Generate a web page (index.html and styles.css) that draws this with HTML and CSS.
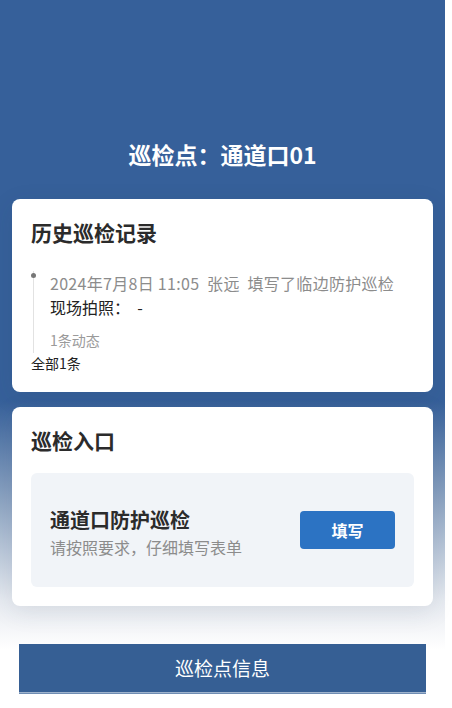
FILE: index.html
```html
<!DOCTYPE html>
<html lang="zh">
<head>
<meta charset="utf-8">
<link rel="stylesheet" href="styles.css">
</head>
<body>
<div class="page">
  <header class="header">
    <h1 class="title">巡检点：通道口01</h1>
  </header>
  <main class="cards">
    <section class="card">
      <h2 class="card-title">历史巡检记录</h2>
      <div class="timeline">
        <div class="tl-item">
          <span class="tl-dot"></span>
          <div class="tl-meta">2024年7月8日 11:05&nbsp; 张远&nbsp; 填写了临边防护巡检</div>
          <div class="tl-field">现场拍照：&nbsp; -</div>
          <div class="tl-count">1条动态</div>
        </div>
      </div>
      <div class="total">全部1条</div>
    </section>
    <section class="card">
      <h2 class="card-title">巡检入口</h2>
      <div class="entry">
        <div class="entry-text">
          <div class="entry-name">通道口防护巡检</div>
          <div class="entry-desc">请按照要求，仔细填写表单</div>
        </div>
        <button class="fill-btn">填写</button>
      </div>
    </section>
  </main>
  <nav class="tabs">
    <div class="tab">巡检点信息</div>
  </nav>
</div>
</body>
</html>
```
FILE: styles.css
```css
html, body {
  margin: 0;
  padding: 0;
  background: #ffffff;
}
body {
  font-family: "Noto Sans CJK SC", "Noto Sans", sans-serif;
  color: #333333;
}
.page {
  width: 445px;
  min-height: 708px;
  background: linear-gradient(to bottom, #36609a 0, #36609a 400px, #8da4c2 500px, #e6eaf0 600px, #ffffff 650px);
}
.header {
  padding-top: 138px;
  padding-bottom: 29px;
}
.title {
  margin: 0;
  text-align: center;
  color: #ffffff;
  font-size: 23px;
  line-height: 32px;
  font-weight: 700;
}
.cards {
  padding: 0 12px;
  display: flex;
  flex-direction: column;
  gap: 15px;
}
.card {
  background: #ffffff;
  border-radius: 8px;
  padding: 19px;
  box-shadow: 0 6px 24px rgba(40, 60, 90, 0.10);
}
.card-title {
  margin: 0;
  font-size: 21px;
  line-height: 28px;
  font-weight: 700;
  color: #2b2b2b;
}
.timeline {
  margin-top: 25px;
  margin-left: 2px;
  border-left: 1px solid #e2e2e2;
  padding-bottom: 3px;
}
.tl-item {
  position: relative;
  padding-left: 16px;
}
.tl-dot {
  position: absolute;
  left: -3px;
  top: 2px;
  width: 5px;
  height: 5px;
  border-radius: 50%;
  background: #777777;
}
.tl-meta {
  font-size: 16px;
  line-height: 24px;
  color: #8c8c8c;
  white-space: nowrap;
  letter-spacing: 0.3px;
}
.tl-field {
  font-size: 16px;
  line-height: 24px;
  color: #222222;
}
.tl-count {
  margin-top: 11px;
  font-size: 14px;
  line-height: 20px;
  color: #9a9a9a;
}
.total {
  font-size: 14px;
  line-height: 20px;
  color: #222222;
}
.entry {
  margin-top: 19px;
  background: #f1f4f8;
  border-radius: 6px;
  height: 114px;
  padding: 0 19px;
  display: flex;
  align-items: center;
  justify-content: space-between;
  box-sizing: border-box;
}
.entry-text {
  margin-top: 4px;
}
.entry-name {
  font-size: 20px;
  line-height: 28px;
  font-weight: 700;
  color: #2b2b2b;
}
.entry-desc {
  margin-top: 2px;
  font-size: 16px;
  line-height: 22px;
  color: #8c8c8c;
}
.fill-btn {
  width: 95px;
  height: 38px;
  border: none;
  border-radius: 4px;
  background: #2c73c3;
  color: #ffffff;
  font-family: inherit;
  font-size: 16px;
  font-weight: 700;
  padding: 0;
}
.tabs {
  padding: 38px 19px 0 19px;
}
.tab {
  height: 48px;
  background: #365f94;
  color: #ffffff;
  font-size: 19px;
  line-height: 48px;
  text-align: center;
  border-bottom: 1px solid #9fb3cc;
  box-shadow: 0 1px 0 #6f8db3;
}
```
